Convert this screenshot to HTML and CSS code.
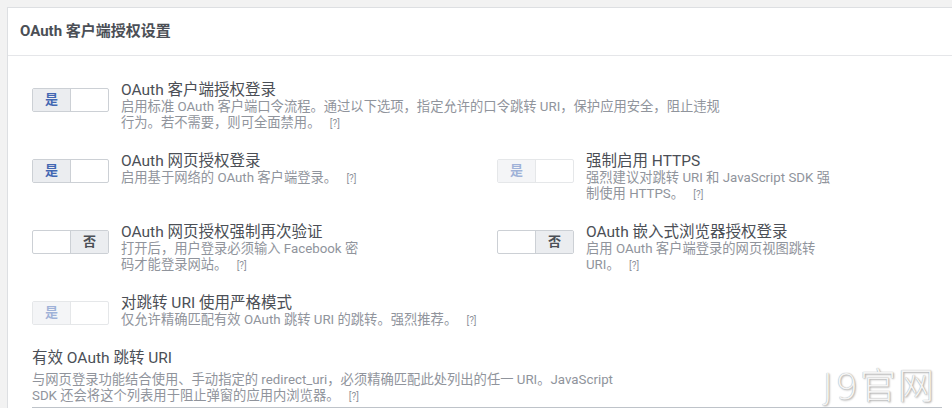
FILE: index.html
```html
<!DOCTYPE html>
<html lang="zh-CN">
<head>
    <meta charset="UTF-8">
    <meta name="viewport" content="width=device-width, initial-scale=1.0">
    <title>OAuth 客户端授权设置</title>
    <link rel="stylesheet" href="styles.css">
</head>
<body>
    <div class="card">
        <div class="card-header">OAuth 客户端授权设置</div>
        <div class="card-body">
            <div class="settings">
                <div class="setting full">
                    <div class="toggle on"><span class="yes">是</span><span class="no"></span></div>
                    <div class="info">
                        <div class="title">OAuth 客户端授权登录</div>
                        <div class="desc wide">启用标准 OAuth 客户端口令流程。通过以下选项，指定允许的口令跳转 URI，保护应用安全，阻止违规行为。若不需要，则可全面禁用。 <span class="help">[?]</span></div>
                    </div>
                </div>

                <div class="setting">
                    <div class="toggle on"><span class="yes">是</span><span class="no"></span></div>
                    <div class="info">
                        <div class="title">OAuth 网页授权登录</div>
                        <div class="desc">启用基于网络的 OAuth 客户端登录。 <span class="help">[?]</span></div>
                    </div>
                </div>
                <div class="setting disabled">
                    <div class="toggle on"><span class="yes">是</span><span class="no"></span></div>
                    <div class="info">
                        <div class="title">强制启用 HTTPS</div>
                        <div class="desc">强烈建议对跳转 URI 和 JavaScript SDK 强制使用 HTTPS。 <span class="help">[?]</span></div>
                    </div>
                </div>

                <div class="setting">
                    <div class="toggle off"><span class="yes"></span><span class="no">否</span></div>
                    <div class="info">
                        <div class="title">OAuth 网页授权强制再次验证</div>
                        <div class="desc">打开后，用户登录必须输入 Facebook 密码才能登录网站。 <span class="help">[?]</span></div>
                    </div>
                </div>
                <div class="setting">
                    <div class="toggle off"><span class="yes"></span><span class="no">否</span></div>
                    <div class="info">
                        <div class="title">OAuth 嵌入式浏览器授权登录</div>
                        <div class="desc">启用 OAuth 客户端登录的网页视图跳转 URI。 <span class="help">[?]</span></div>
                    </div>
                </div>

                <div class="setting full disabled">
                    <div class="toggle on"><span class="yes">是</span><span class="no"></span></div>
                    <div class="info">
                        <div class="title">对跳转 URI 使用严格模式</div>
                        <div class="desc wide">仅允许精确匹配有效 OAuth 跳转 URI 的跳转。强烈推荐。 <span class="help">[?]</span></div>
                    </div>
                </div>
            </div>

            <div class="field">
                <div class="field-label">有效 OAuth 跳转 URI</div>
                <div class="field-desc">与网页登录功能结合使用、手动指定的 redirect_uri，必须精确匹配此处列出的任一 URI。JavaScript SDK 还会将这个列表用于阻止弹窗的应用内浏览器。 <span class="help">[?]</span></div>
                <div class="field-input"></div>
            </div>
        </div>
    </div>

    <div class="watermark">J9官网</div>
</body>
</html>
```

FILE: styles.css
```css
body {
    margin: 0;
    padding: 7px 0 0 7px;
    background: #f2f2f2;
    font-family: Roboto, "Noto Sans CJK SC", sans-serif;
    color: #4b4f56;
    overflow: hidden;
    height: 401px;
}
.card {
    box-sizing: border-box;
    width: 960px;
    background: #fff;
    border: 1px solid #dddfe2;
}
.card-header {
    height: 47px;
    line-height: 47px;
    padding: 0 12px;
    font-size: 15px;
    font-weight: bold;
    border-bottom: 1px solid #e5e6e9;
}
.card-body {
    padding: 25px 24px 0;
}
.settings {
    display: grid;
    grid-template-columns: 465px 1fr;
    row-gap: 21px;
}
.setting {
    display: flex;
    align-items: flex-start;
}
.setting.full {
    grid-column: 1 / 3;
}
.setting.disabled .toggle {
    opacity: 0.5;
}
.toggle {
    display: flex;
    flex: none;
    box-sizing: border-box;
    width: 77px;
    height: 24px;
    margin-top: 7px;
    border: 1px solid #ccd0d5;
    border-radius: 2px;
    overflow: hidden;
}
.toggle span {
    flex: 1;
    text-align: center;
    line-height: 22px;
    font-size: 13px;
    font-weight: bold;
}
.toggle .yes {
    border-right: 1px solid #ccd0d5;
}
.toggle.on .yes {
    background: #ebedf0;
    color: #4267b2;
}
.toggle.off .no {
    background: #ebedf0;
    color: #4b4f56;
}
.info {
    margin-left: 12px;
}
.title {
    font-size: 15.5px;
    line-height: 18px;
}
.desc {
    width: 250px;
    font-size: 13.3px;
    line-height: 16px;
    color: #90949c;
}
.desc.wide {
    width: 606px;
}
.help {
    display: inline-block;
    font-size: 10px;
    line-height: 12px;
    margin-left: 6px;
}
.field {
    margin-top: 21px;
}
.field-label {
    font-size: 15.5px;
    line-height: 18px;
    margin-bottom: 5px;
}
.field-desc {
    width: 605px;
    font-size: 13.3px;
    line-height: 16px;
    color: #90949c;
}
.field-input {
    height: 30px;
    margin-top: 3px;
    border-top: 1px solid #bec3c9;
}
.watermark {
    position: absolute;
    right: 16px;
    top: 357px;
    font-family: "DejaVu Sans", "Noto Sans CJK SC", sans-serif;
    font-weight: 200;
    font-size: 36px;
    letter-spacing: 2px;
    color: #f4f4f4;
    text-shadow: 0 0 1px #9a9a9a, 1px 1px 2px #b0b0b0;
}
```
